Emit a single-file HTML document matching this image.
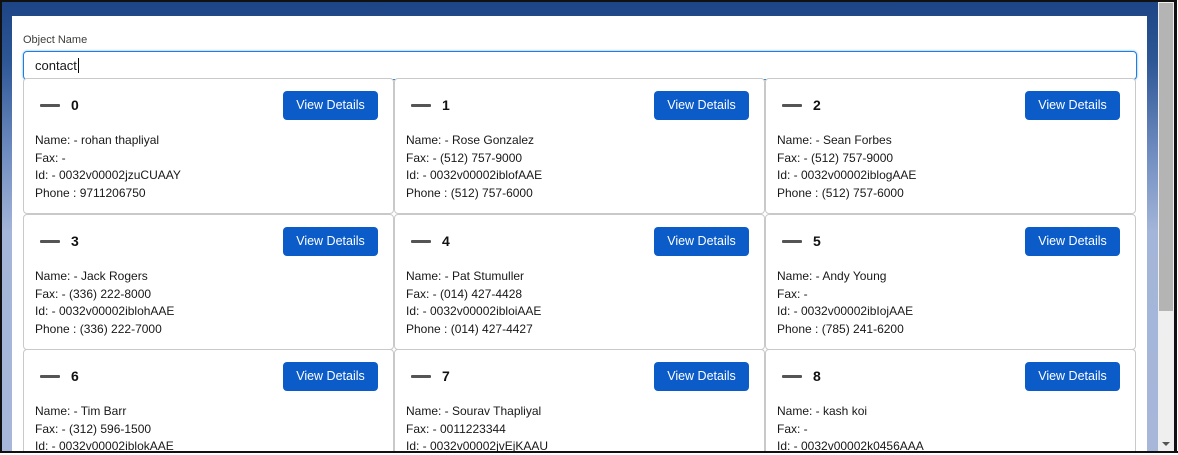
<!DOCTYPE html>
<html><head><meta charset="utf-8"><style>
*{box-sizing:border-box;margin:0;padding:0}
html,body{width:1178px;height:455px;overflow:hidden}
body{background:#fff;position:relative;font-family:"Liberation Sans",sans-serif;}
#frame{position:absolute;left:0;top:0;width:1177px;height:453px;border:2px solid #111;overflow:hidden;
background:linear-gradient(180deg,#1d4585 0px,#2e5796 60px,#6f8cc0 150px,#a3b5d8 230px,#a6b7da 455px);}
#panel{position:absolute;left:10px;top:14px;width:1135px;height:435px;background:#fff;}
#sb{position:absolute;left:1156px;top:0;width:17px;height:449px;background:#efefef;}
#thumb{position:absolute;left:1px;top:1px;width:14px;height:308px;background:#b4b4b4;}
#arrow{position:absolute;left:4px;bottom:5px;width:0;height:0;border-left:4px solid transparent;border-right:4px solid transparent;border-top:4px solid #555;}
.lbl{position:absolute;left:11px;top:18px;font-size:11px;color:#3e3e3c;}
.inp{position:absolute;left:11px;top:35px;width:1114px;height:29px;border:1px solid #1b7ee0;border-radius:4px;box-shadow:0 0 2px #6aa9f0;font-size:13px;padding:6px 11px;color:#181818;}
.card{position:absolute;width:371px;height:136px;border:1px solid #c9c9c9;border-radius:4px;background:#fff;overflow:hidden;}
.card.last{height:102px;border-bottom:none;border-radius:4px 4px 0 0}
.dash{position:absolute;left:16px;top:25px;width:20px;height:3px;background:#555;border-radius:1px;}
.num{position:absolute;left:47px;top:18px;font-size:14px;font-weight:bold;color:#111;}
.btn{position:absolute;left:259px;top:12px;width:95px;height:29px;background:#0b5cc9;border-radius:4px;color:#fff;font-size:12.5px;text-align:center;line-height:29px;}
.info{position:absolute;left:11px;top:53px;font-size:12px;line-height:17.7px;color:#181818;}
</style></head><body>
<div id="frame">
<div id="panel">
<div class="lbl">Object Name</div>
<div class="inp">contact<span style="border-left:1px solid #000;margin-left:1px"></span></div>
</div>
<div id="sb"><div id="thumb"></div><div id="arrow"></div></div>
</div>
<div class="card" style="left:23px;top:78px"><div class="dash"></div><div class="num">0</div><div class="btn">View Details</div><div class="info">Name: - rohan thapliyal<br>Fax: -<br>Id: - 0032v00002jzuCUAAY<br>Phone : 9711206750</div></div>
<div class="card" style="left:394px;top:78px"><div class="dash"></div><div class="num">1</div><div class="btn">View Details</div><div class="info">Name: - Rose Gonzalez<br>Fax: - (512) 757-9000<br>Id: - 0032v00002iblofAAE<br>Phone : (512) 757-6000</div></div>
<div class="card" style="left:765px;top:78px"><div class="dash"></div><div class="num">2</div><div class="btn">View Details</div><div class="info">Name: - Sean Forbes<br>Fax: - (512) 757-9000<br>Id: - 0032v00002iblogAAE<br>Phone : (512) 757-6000</div></div>

<div class="card" style="left:23px;top:214px"><div class="dash"></div><div class="num">3</div><div class="btn">View Details</div><div class="info">Name: - Jack Rogers<br>Fax: - (336) 222-8000<br>Id: - 0032v00002iblohAAE<br>Phone : (336) 222-7000</div></div>
<div class="card" style="left:394px;top:214px"><div class="dash"></div><div class="num">4</div><div class="btn">View Details</div><div class="info">Name: - Pat Stumuller<br>Fax: - (014) 427-4428<br>Id: - 0032v00002ibloiAAE<br>Phone : (014) 427-4427</div></div>
<div class="card" style="left:765px;top:214px"><div class="dash"></div><div class="num">5</div><div class="btn">View Details</div><div class="info">Name: - Andy Young<br>Fax: -<br>Id: - 0032v00002ibIojAAE<br>Phone : (785) 241-6200</div></div>

<div class="card last" style="left:23px;top:349px"><div class="dash"></div><div class="num">6</div><div class="btn">View Details</div><div class="info">Name: - Tim Barr<br>Fax: - (312) 596-1500<br>Id: - 0032v00002iblokAAE</div></div>
<div class="card last" style="left:394px;top:349px"><div class="dash"></div><div class="num">7</div><div class="btn">View Details</div><div class="info">Name: - Sourav Thapliyal<br>Fax: - 0011223344<br>Id: - 0032v00002jvEjKAAU</div></div>
<div class="card last" style="left:765px;top:349px"><div class="dash"></div><div class="num">8</div><div class="btn">View Details</div><div class="info">Name: - kash koi<br>Fax: -<br>Id: - 0032v00002k0456AAA</div></div>
<div style="position:absolute;left:0;top:451px;width:1178px;height:4px;background:#fff;border-top:2px solid #111"></div>
<div style="position:absolute;left:1174px;top:0;width:2px;height:453px;background:#111"></div>
</body></html>
